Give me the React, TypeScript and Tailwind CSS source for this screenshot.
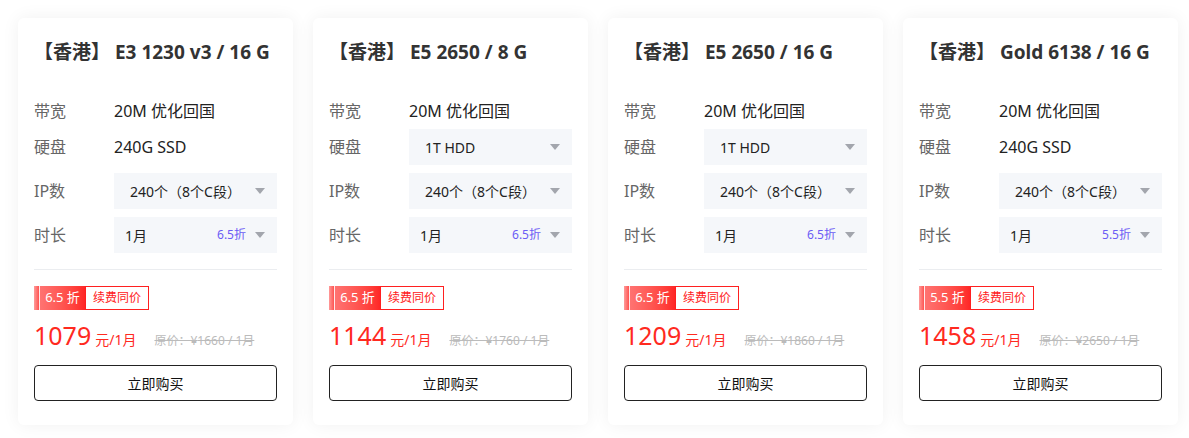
import { useState } from "react";

interface Plan {
  title: string;
  disk: string;
  diskSelect: boolean;
  discount: string;
  price: string;
  original: string;
}

const plans: Plan[] = [
  { title: "【香港】 E3 1230 v3 / 16 G", disk: "240G SSD", diskSelect: false, discount: "6.5", price: "1079", original: "1660" },
  { title: "【香港】 E5 2650 / 8 G", disk: "1T HDD", diskSelect: true, discount: "6.5", price: "1144", original: "1760" },
  { title: "【香港】 E5 2650 / 16 G", disk: "1T HDD", diskSelect: true, discount: "6.5", price: "1209", original: "1860" },
  { title: "【香港】 Gold 6138 / 16 G", disk: "240G SSD", diskSelect: false, discount: "5.5", price: "1458", original: "2650" },
];

function Caret() {
  return (
    <svg width="10" height="6" viewBox="0 0 10 6" className="shrink-0">
      <path d="M0 0 L10 0 L5 6 Z" fill="#a3a6ad" />
    </svg>
  );
}

function SelectBox({ children, pl = "pl-4" }: { children: React.ReactNode; pl?: string }) {
  return (
    <div className={`flex-1 h-9 bg-[#f5f7fa] flex items-center pr-3 ${pl}`}>
      {children}
    </div>
  );
}

function PlanCard({ plan }: { plan: Plan }) {
  const [hover, setHover] = useState(false);
  return (
    <div className="w-[275px] shrink-0 bg-white rounded-md shadow-[0_0_18px_rgba(0,0,0,0.06)] px-4 pt-[22px] pb-6">
      <h3 className="text-[19px] leading-6 font-bold text-[#333]">{plan.title}</h3>

      <div className="mt-[33px] text-[16px]">
        {/* 带宽 */}
        <div className="flex items-center h-7">
          <span className="w-20 text-[#666]">带宽</span>
          <span className="text-[#222]">20M 优化回国</span>
        </div>

        {/* 硬盘 */}
        <div className="flex items-center h-9 mt-1">
          <span className="w-20 text-[#666]">硬盘</span>
          {plan.diskSelect ? (
            <SelectBox>
              <span className="flex-1 text-[14px] text-[#222]">{plan.disk}</span>
              <Caret />
            </SelectBox>
          ) : (
            <span className="text-[#222]">{plan.disk}</span>
          )}
        </div>

        {/* IP数 */}
        <div className="flex items-center h-9 mt-2">
          <span className="w-20 text-[#666]">IP数</span>
          <SelectBox>
            <span className="flex-1 text-[14px] text-[#222]">240个（8个C段）</span>
            <Caret />
          </SelectBox>
        </div>

        {/* 时长 */}
        <div className="flex items-center h-9 mt-2">
          <span className="w-20 text-[#666]">时长</span>
          <SelectBox pl="pl-[11px]">
            <span className="flex-1 text-[14px] text-[#222]">1月</span>
            <span className="text-[12px] text-[#6b5cf5] mr-[9px]">{plan.discount}折</span>
            <Caret />
          </SelectBox>
        </div>
      </div>

      <div className="mt-4 border-t border-[#ebedf0]" />

      {/* badge */}
      <div className="mt-4 flex h-6 w-max">
        <div className="w-[51px] flex items-center bg-gradient-to-r from-[#ff7a7a] to-[#ff2626] text-white text-[13px]">
          <span className="w-[6px] h-full bg-gradient-to-r from-[#ff9a9a] to-[#ff5050] border-r border-white/80" />
          <span className="flex-1 text-center">{plan.discount} 折</span>
        </div>
        <div className="w-[64px] flex items-center justify-center border border-[#ff2020] text-[#ff2020] text-[12px]">续费同价</div>
      </div>

      {/* price */}
      <div className="mt-[9px] flex items-baseline">
        <span className="text-[25px] leading-8 text-[#ff2a1f]">{plan.price}</span>
        <span className="ml-[4px] text-[14px] text-[#ff2a1f]">元/1月</span>
        <span className="ml-[18px] text-[12px] text-[#bbb] line-through">原价：¥{plan.original} / 1月</span>
      </div>

      <button
        onMouseEnter={() => setHover(true)}
        onMouseLeave={() => setHover(false)}
        className={`mt-[14px] w-full h-9 rounded border text-[14px] ${hover ? "border-[#ff2a1f] text-[#ff2a1f]" : "border-[#222] text-[#111]"}`}
      >
        立即购买
      </button>
    </div>
  );
}

export default function App() {
  return (
    <div
      className="min-h-[438px] bg-white pt-[18px] pl-[18px] flex items-start gap-5"
      style={{ fontFamily: '"Noto Sans", "Noto Sans CJK SC", sans-serif' }}
    >
      {plans.map((p) => (
        <PlanCard key={p.title} plan={p} />
      ))}
    </div>
  );
}
